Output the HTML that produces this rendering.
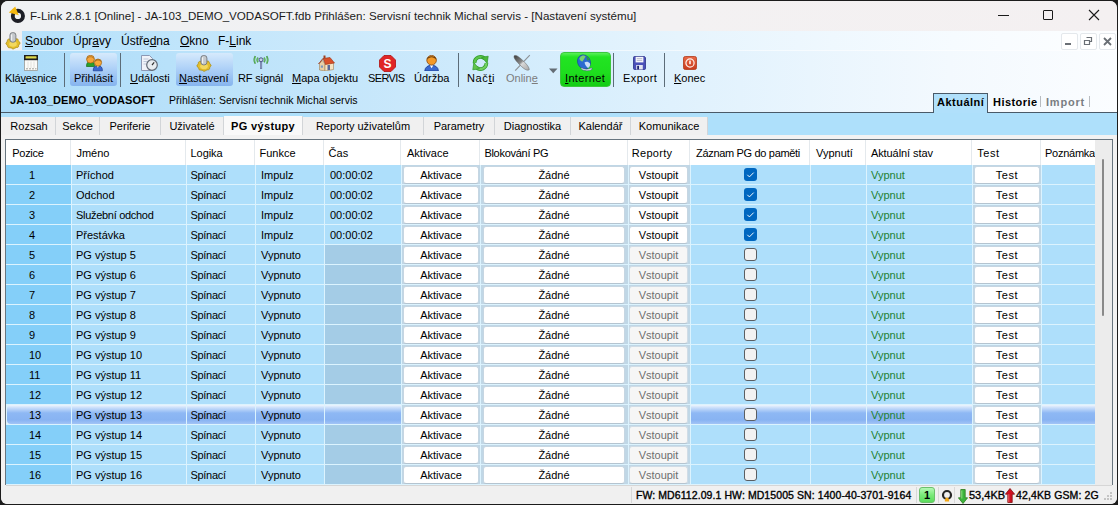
<!DOCTYPE html>
<html><head><meta charset="utf-8">
<style>
*{margin:0;padding:0;box-sizing:border-box}
html,body{width:1118px;height:505px;overflow:hidden;background:#1c1c1c}
body{font-family:"Liberation Sans", sans-serif;font-size:11px;color:#000;position:relative}
.a{position:absolute;white-space:nowrap}
.t{position:absolute;white-space:nowrap;line-height:13px;font-size:11px}
u{text-decoration:none;border-bottom:1px solid currentColor;line-height:9px;display:inline-block}
</style></head><body>

<div class="a" style="left:1px;top:1px;width:1116px;height:503px;background:#f0f0f0;border-radius:7px 7px 7px 7px"></div>
<div class="a" style="left:1px;top:1px;width:1116px;height:30px;background:linear-gradient(90deg,#eff1f3 0%,#f3f1f2 60%,#f4f0f1 100%);border-radius:7px 7px 0 0"></div>
<svg class="a" style="left:0px;top:0px" width="32" height="32" viewBox="0 0 32 32">
<circle cx="17.9" cy="15.9" r="5.1" fill="none" stroke="#1c1e26" stroke-width="3.9"/>
<path d="M8.8 12.6 L15.2 6.4 L18.8 15.2 Z" fill="#f4b810"/>
</svg>
<div class="a" style="left:30px;top:7.5px;font-size:11.6px;line-height:15px;color:#1a1a1a">F-Link 2.8.1 [Online] - JA-103_DEMO_VODASOFT.fdb Přihlášen: Servisní technik Michal servis - [Nastavení systému]</div>
<div class="a" style="left:998px;top:15px;width:11px;height:1px;background:#1a1a1a"></div>
<div class="a" style="left:1043px;top:10px;width:10px;height:10px;border:1px solid #1a1a1a;border-radius:1px"></div>
<svg class="a" style="left:1088px;top:9px" width="12" height="12" viewBox="0 0 12 12"><path d="M1 1 L11 11 M11 1 L1 11" stroke="#1a1a1a" stroke-width="1.1"/></svg>
<div class="a" style="left:1px;top:31px;width:1116px;height:82px;background:linear-gradient(90deg,#acdcf9 0%,#c4e6fb 30%,#dff1fd 60%,#f3f9fe 85%,#fbfdff 100%)"></div>
<div class="a" style="left:22px;top:31px;width:1095px;height:19px;background:linear-gradient(90deg,#b4e0fa 0%,#cdeafc 30%,#e6f4fd 60%,#f6fbff 85%,#fdfeff 100%)"></div>
<div class="a" style="left:1px;top:31px;width:21px;height:19px;background:#f0f0f0"></div>
<div class="a" style="left:1px;top:50px;width:1116px;height:1px;background:rgba(255,255,255,0.6)"></div>
<svg class="a" style="left:5px;top:32px" width="17" height="18" viewBox="0 0 17 18">
<path d="M15.04 11.30 L14.82 11.83 L14.18 12.28 L14.03 12.75 L13.82 13.21 L13.56 13.66 L13.62 14.28 L13.43 14.83 L12.98 15.25 L12.35 15.51 L11.50 15.46 L10.97 15.71 L10.41 15.92 L9.83 16.08 L9.32 16.57 L8.69 16.84 L8.00 16.89 L7.33 16.72 L6.77 16.20 L6.17 16.08 L5.59 15.92 L5.03 15.71 L4.24 15.76 L3.55 15.61 L3.02 15.25 L2.70 14.75 L2.76 14.08 L2.44 13.66 L2.18 13.21 L1.97 12.75 L1.37 12.35 L1.01 11.85 L0.96 11.30 L1.18 10.77 L1.82 10.32 L1.97 9.85 L2.18 9.39 L2.44 8.94 L2.38 8.32 L2.57 7.77 L3.02 7.35 L3.65 7.09 L4.50 7.14 L5.03 6.89 L5.59 6.68 L6.17 6.52 L6.68 6.03 L7.31 5.76 L8.00 5.71 L8.67 5.88 L9.23 6.40 L9.83 6.52 L10.41 6.68 L10.97 6.89 L11.76 6.84 L12.45 6.99 L12.98 7.35 L13.30 7.85 L13.24 8.52 L13.56 8.94 L13.82 9.39 L14.03 9.85 L14.63 10.25 L14.99 10.75 L15.04 11.30Z" fill="#e4be2c" stroke="#a88a10" stroke-width="0.8"/>
<ellipse cx="8" cy="12" rx="3.8" ry="2.8" fill="#f2d860"/>
<rect x="4.9" y="0.6" width="6" height="9.6" rx="2.6" fill="#c4c8cc" stroke="#686c70" stroke-width="0.8"/>
<path d="M6.6 2.5v6" stroke="#f4f4f4" stroke-width="1.1"/>
</svg>
<div class="t" style="left:25px;top:35px;font-size:12px;color:#000"><span style="text-decoration:underline;text-underline-offset:1px">S</span>oubor</div>
<div class="t" style="left:73px;top:35px;font-size:12px">Úpr<span style="text-decoration:underline;text-underline-offset:1px">a</span>vy</div>
<div class="t" style="left:121px;top:35px;font-size:12px">Ústře<span style="text-decoration:underline;text-underline-offset:1px">d</span>na</div>
<div class="t" style="left:180px;top:35px;font-size:12px"><span style="text-decoration:underline;text-underline-offset:1px">O</span>kno</div>
<div class="t" style="left:218px;top:35px;font-size:12px">F-<span style="text-decoration:underline;text-underline-offset:1px">L</span>ink</div>
<div class="a" style="left:1061px;top:33px;width:17px;height:17px;background:#fff;border:1px solid #e4e8ec;border-radius:2px"></div>
<div class="a" style="left:1080px;top:33px;width:17px;height:17px;background:#fff;border:1px solid #e4e8ec;border-radius:2px"></div>
<div class="a" style="left:1099px;top:33px;width:17px;height:17px;background:#fff;border:1px solid #e4e8ec;border-radius:2px"></div>
<div class="a" style="left:1065px;top:43px;width:6px;height:2px;background:#6a6f75"></div>
<svg class="a" style="left:1083px;top:36px" width="11" height="11" viewBox="0 0 11 11"><path d="M3.5 1.5h5v4h-2 M1.5 4.5h5v4h-5z" fill="none" stroke="#6a6f75" stroke-width="1.2"/></svg>
<svg class="a" style="left:1102px;top:36px" width="11" height="11" viewBox="0 0 11 11"><path d="M2 2L9 9M9 2L2 9" stroke="#6a6f75" stroke-width="1.8"/></svg>
<div class="a" style="left:64px;top:53px;width:1px;height:34px;background:#5c6c78"></div>
<div class="a" style="left:120px;top:53px;width:1px;height:34px;background:#5c6c78"></div>
<div class="a" style="left:458px;top:53px;width:1px;height:34px;background:#5c6c78"></div>
<div class="a" style="left:613px;top:53px;width:1px;height:34px;background:#5c6c78"></div>
<div class="a" style="left:664px;top:53px;width:1px;height:34px;background:#5c6c78"></div>
<div class="a" style="left:70px;top:53px;width:47px;height:33px;border-radius:3px;background:linear-gradient(180deg,#d6eafc 0%,#b0d2f8 45%,#86b4ee 100%)"></div>
<div class="a" style="left:176px;top:53px;width:57px;height:33px;border-radius:3px;background:linear-gradient(180deg,#d6eafc 0%,#b0d2f8 45%,#86b4ee 100%)"></div>
<div class="a" style="left:560px;top:52px;width:51px;height:35px;border-radius:4px;background:linear-gradient(180deg,#5af05a 0%,#22e422 12%,#1ede1e 60%,#14cc14 100%);border:1px solid #3cc83c"></div>
<div class="t" style="left:5px;top:72px;color:#000;letter-spacing:-0.15px">Klá<span style="text-decoration:underline;text-underline-offset:1px">v</span>esnice</div>
<div class="t" style="left:74px;top:72px;color:#000;letter-spacing:0px">Přihlásit</div>
<div class="t" style="left:130px;top:72px;color:#000;letter-spacing:0px"><span style="text-decoration:underline;text-underline-offset:1px">U</span>dálosti</div>
<div class="t" style="left:179px;top:72px;color:#000;letter-spacing:0px"><span style="text-decoration:underline;text-underline-offset:1px">N</span>astavení</div>
<div class="t" style="left:238px;top:72px;color:#000;letter-spacing:-0.15px">RF signál</div>
<div class="t" style="left:292px;top:72px;color:#000;letter-spacing:0px"><span style="text-decoration:underline;text-underline-offset:1px">M</span>apa objektu</div>
<div class="t" style="left:368px;top:72px;color:#000;letter-spacing:-0.6px">SERVIS</div>
<div class="t" style="left:414px;top:72px;color:#000;letter-spacing:0px">Údržba</div>
<div class="t" style="left:467px;top:72px;color:#000;letter-spacing:0.6px">Nač<span style="text-decoration:underline;text-underline-offset:1px">t</span>i</div>
<div class="t" style="left:506px;top:72px;color:#7c7c7c;letter-spacing:0px">Onlin<span style="text-decoration:underline;text-underline-offset:1px">e</span></div>
<div class="t" style="left:565px;top:72px;color:#000;letter-spacing:0.35px"><span style="text-decoration:underline;text-underline-offset:1px">I</span>nternet</div>
<div class="t" style="left:623px;top:72px;color:#000;letter-spacing:0.4px">Export</div>
<div class="t" style="left:674px;top:72px;color:#000;letter-spacing:0px"><span style="text-decoration:underline;text-underline-offset:1px">K</span>onec</div>

<svg class="a" style="left:24px;top:55px" width="14" height="16" viewBox="0 0 14 16">
<rect x="0.5" y="0.5" width="13" height="15" fill="#fbfbf8" stroke="#9a9a94" stroke-width="0.8"/>
<rect x="0" y="0" width="14" height="5.2" fill="#1e1e1e"/><rect x="1.5" y="1.3" width="11" height="2.2" rx="0.6" fill="#dcd84a"/>
<path d="M4 6.5v6.5 M7 6.5v6.5 M10 6.5v6.5" stroke="#dcdcd4" stroke-width="0.8"/>
<path d="M2 13.8h2 M5 13.8h2 M8 13.8h2 M11 13.8h1.5" stroke="#8a8a84" stroke-width="0.8"/>
</svg>
<svg class="a" style="left:85px;top:55px" width="18" height="17" viewBox="0 0 18 17">
<path d="M1.5 11.5c0-3.5 1-5 4-5s4 1.5 4 5z" fill="#2aa02c" stroke="#146a16" stroke-width="0.7"/>
<circle cx="5.5" cy="4.2" r="3.9" fill="#f6a43a" stroke="#9a6010" stroke-width="0.7"/>
<path d="M1.6 4.4c-0.3-4 7.8-4.6 7.8 0c-1-1.6-2.6-2.2-3.9-2.2s-2.9 0.6-3.9 2.2z" fill="#b47a28"/>
<path d="M8.2 15.8c0-3.6 1.4-5 4.6-5s4.6 1.4 4.6 5z" fill="#3a68d0" stroke="#1a3a90" stroke-width="0.7"/>
<path d="M11.8 10.9l1 1.8l1-1.8z" fill="#fff"/>
<circle cx="13" cy="7.6" r="3.6" fill="#f8a83c" stroke="#9a6010" stroke-width="0.7"/>
<path d="M9.4 7.6c-0.2-4.4 7.4-4.4 7.2 0c-1-1.4-2.2-2-3.6-2s-2.6 0.6-3.6 2z" fill="#a87020"/>
</svg>
<svg class="a" style="left:141px;top:55px" width="17" height="16" viewBox="0 0 17 16">
<path d="M0.5 0.5h8l3 3v12h-11z" fill="#f0f2f8" stroke="#8c98b4" stroke-width="1"/>
<path d="M2.5 4h5 M2.5 6.5h4 M2.5 9h3" stroke="#b0bcd0" stroke-width="0.8"/>
<circle cx="11" cy="10" r="5.3" fill="#e8ecf0" stroke="#606874" stroke-width="1.2"/>
<path d="M11 10l2.2-2.6" stroke="#303030" stroke-width="1.2"/>
</svg>
<svg class="a" style="left:196px;top:55px" width="16" height="17" viewBox="0 0 16 17">
<path d="M15.04 10.60 L14.82 11.13 L14.18 11.58 L14.03 12.05 L13.82 12.51 L13.56 12.96 L13.62 13.58 L13.43 14.13 L12.98 14.55 L12.35 14.81 L11.50 14.76 L10.97 15.01 L10.41 15.22 L9.83 15.38 L9.32 15.87 L8.69 16.14 L8.00 16.19 L7.33 16.02 L6.77 15.50 L6.17 15.38 L5.59 15.22 L5.03 15.01 L4.24 15.06 L3.55 14.91 L3.02 14.55 L2.70 14.05 L2.76 13.38 L2.44 12.96 L2.18 12.51 L1.97 12.05 L1.37 11.65 L1.01 11.15 L0.96 10.60 L1.18 10.07 L1.82 9.62 L1.97 9.15 L2.18 8.69 L2.44 8.24 L2.38 7.62 L2.57 7.07 L3.02 6.65 L3.65 6.39 L4.50 6.44 L5.03 6.19 L5.59 5.98 L6.17 5.82 L6.68 5.33 L7.31 5.06 L8.00 5.01 L8.67 5.18 L9.23 5.70 L9.83 5.82 L10.41 5.98 L10.97 6.19 L11.76 6.14 L12.45 6.29 L12.98 6.65 L13.30 7.15 L13.24 7.82 L13.56 8.24 L13.82 8.69 L14.03 9.15 L14.63 9.55 L14.99 10.05 L15.04 10.60Z" fill="#e4be2c" stroke="#a88a10" stroke-width="0.8"/>
<ellipse cx="8" cy="11.3" rx="3.8" ry="2.8" fill="#f2d860"/>
<rect x="4.9" y="0.5" width="6" height="9.4" rx="2.6" fill="#c4c8cc" stroke="#686c70" stroke-width="0.8"/>
<path d="M6.6 2.3v6" stroke="#f4f4f4" stroke-width="1.1"/>
</svg>
<svg class="a" style="left:253px;top:55px" width="16" height="15" viewBox="0 0 16 15">
<path d="M2.4 1.2C1.2 3.2 1.2 6.6 2.4 8.6 M13.6 1.2C14.8 3.2 14.8 6.6 13.6 8.6 M5 2.6C4.2 3.8 4.2 6 5 7.2 M11 2.6C11.8 3.8 11.8 6 11 7.2" stroke="#3c8a3c" stroke-width="1.6" fill="none"/>
<path d="M2.4 1.6C1.5 3.4 1.5 6.4 2.4 8.2 M13.6 1.6C14.5 3.4 14.5 6.4 13.6 8.2 M5 3C4.5 4 4.5 5.8 5 6.8 M11 3C11.5 4 11.5 5.8 11 6.8" stroke="#8ae88a" stroke-width="0.7" fill="none"/>
<rect x="7.2" y="5.5" width="1.7" height="8.3" fill="#8a96c0" stroke="#5a6690" stroke-width="0.4"/>
<circle cx="8" cy="4.8" r="2" fill="#c8d0e8" stroke="#4a5488" stroke-width="1"/>
</svg>
<svg class="a" style="left:318px;top:55px" width="17" height="16" viewBox="0 0 17 16">
<path d="M1.5 8.5v6.5l5.5 1v-7l-2.5-3.5z" fill="#e8d0a8" stroke="#a08058" stroke-width="0.6"/>
<path d="M7 9v7l8.5-1.5v-6l-3-3z" fill="#f6e4c4" stroke="#a08058" stroke-width="0.6"/>
<path d="M0.5 9L5 3.5L7.5 9.5L16.5 8L12 2.5L5 3.5z" fill="#d8502a" stroke="#9a3010" stroke-width="0.6"/>
<rect x="5.5" y="0.5" width="2" height="3" fill="#a04020"/>
<rect x="9.5" y="10" width="2.5" height="5" fill="#5a6a98"/>
<rect x="2.8" y="10.5" width="2.2" height="2.2" fill="#7a9ac0"/>
</svg>
<svg class="a" style="left:379px;top:55px" width="17" height="17" viewBox="0 0 17 17">
<path d="M5 0.5h7l4.5 4.5v7l-4.5 4.5h-7l-4.5-4.5v-7z" fill="#e02626" stroke="#b01010" stroke-width="0.8"/>
<text x="8.5" y="12.6" font-family="Liberation Sans" font-weight="bold" font-size="12" text-anchor="middle" fill="#fff">S</text>
</svg>
<svg class="a" style="left:424px;top:55px" width="15" height="16" viewBox="0 0 15 16">
<path d="M0.8 16C0.8 8.3 14.4 8.3 14.4 16Z" fill="#3a6ad0" stroke="#1a3a90" stroke-width="0.8"/>
<path d="M5.8 10.2l1.8 3l1.8-3z" fill="#fff"/>
<circle cx="7.6" cy="5.2" r="4.8" fill="#f49a28" stroke="#8a4a10" stroke-width="0.8"/>
<path d="M2.9 4.8c0-4.6 9.4-4.6 9.4 0c-1.2-1.8-3-2.6-4.7-2.6s-3.5 0.8-4.7 2.6z" fill="#6a4010"/>
</svg>
<svg class="a" style="left:472px;top:55px" width="17" height="16" viewBox="0 0 17 16">
<path d="M2.6 8.2A5.9 5.9 0 0 1 12.6 3.6" fill="none" stroke="#2e9a2a" stroke-width="3.6"/>
<path d="M2.6 8.2A5.9 5.9 0 0 1 12.6 3.6" fill="none" stroke="#5cc44a" stroke-width="2.2"/>
<path d="M9.6 2.2L16.2 1.2L15.2 8.2z" fill="#4cb83c" stroke="#2e9a2a" stroke-width="0.7"/>
<path d="M14.4 7.8A5.9 5.9 0 0 1 4.4 12.4" fill="none" stroke="#2e9a2a" stroke-width="3.6"/>
<path d="M14.4 7.8A5.9 5.9 0 0 1 4.4 12.4" fill="none" stroke="#72d060" stroke-width="2.2"/>
<path d="M7.4 13.8L0.8 14.8L1.8 7.8z" fill="#60c44c" stroke="#2e9a2a" stroke-width="0.7"/>
</svg>
<svg class="a" style="left:513px;top:54px" width="18" height="18" viewBox="0 0 18 18">
<defs><linearGradient id="sg" x1="0" y1="0" x2="1" y2="1"><stop offset="0" stop-color="#3a3a3a"/><stop offset="0.45" stop-color="#8a8a8a"/><stop offset="0.55" stop-color="#d8d8d8"/><stop offset="1" stop-color="#a8a8a8"/></linearGradient></defs>
<path d="M16.8 1.2L2.2 16.6" stroke="#8c9094" stroke-width="1.1"/>
<path d="M1.2 1.8C3 0.6 5.5 2.5 9.5 6.2C13.5 10 16.5 13.5 16.2 15.8C14 17 11 15 7.5 11.5C3.5 7.5 0.2 4 1.2 1.8z" fill="url(#sg)" stroke="#5a5a5a" stroke-width="0.5"/>
</svg>
<svg class="a" style="left:576px;top:54px" width="18" height="18" viewBox="0 0 18 18">
<ellipse cx="8" cy="8" rx="6.3" ry="7.4" transform="rotate(-30 8 8)" fill="#2a6ad0" stroke="#1a4a90" stroke-width="0.6"/>
<path d="M4 3.5C5.5 1.5 8 1 9.5 2.2C9 4 7.5 5.5 6.5 7.5C5 7.5 3.5 6 3.4 4.6z" fill="#7ad070"/>
<path d="M10 2.5C12 3 13 4.5 13.2 6L11.5 6.5C11 5 10.5 4 10 2.5z" fill="#2e9a3a"/>
<path d="M8.5 8.5C10 7 12.5 7.5 14 9.5C14.5 11.5 13.5 13.5 12 14C10.5 13 9 11 8.5 8.5z" fill="#c8dcf8"/>
<path d="M5.5 13.5C8 15.5 12 15.8 15.5 13.8L16.2 15.2C12.5 17.5 8 17 5 15z" fill="#e8eef8" stroke="#3a4a70" stroke-width="0.5"/>
</svg>
<svg class="a" style="left:633px;top:56px" width="13" height="14" viewBox="0 0 13 14">
<path d="M1.6 0.5h9.8l1.1 1.1v10.8a1.1 1.1 0 0 1-1.1 1.1h-9.8a1.1 1.1 0 0 1-1.1-1.1v-10.8a1.1 1.1 0 0 1 1.1-1.1z" fill="#4a50b8" stroke="#2a3088" stroke-width="0.8"/>
<rect x="2.6" y="0.8" width="7.8" height="5.6" fill="#f6f6fa"/>
<path d="M3.8 2.6h5.4 M3.8 4.4h5.4" stroke="#a8acc4" stroke-width="0.8"/>
<rect x="3.2" y="9" width="6.6" height="4.5" fill="#e4e6f0"/><rect x="4.2" y="9.8" width="1.8" height="3.7" fill="#1c2270"/>
</svg>
<svg class="a" style="left:683px;top:56px" width="14" height="14" viewBox="0 0 14 14">
<defs><linearGradient id="kg" x1="0" y1="0" x2="0" y2="1"><stop offset="0" stop-color="#e86a48"/><stop offset="1" stop-color="#c83a1c"/></linearGradient></defs>
<rect x="0.5" y="0.5" width="13" height="13" rx="1.8" fill="url(#kg)" stroke="#b03818" stroke-width="0.8"/>
<circle cx="7" cy="7" r="4.1" fill="none" stroke="#fff2ec" stroke-width="1.2"/>
<rect x="6.2" y="4.6" width="1.6" height="3.6" fill="#fff2ec"/>
</svg>
<svg class="a" style="left:549px;top:68px" width="9" height="6" viewBox="0 0 9 6"><path d="M0 0.5h8.5l-4.25 4.8z" fill="#656d75"/></svg>

<div class="t" style="left:10px;top:94px;font-weight:bold;letter-spacing:0.12px">JA-103_DEMO_VODASOFT</div>
<div class="t" style="left:169px;top:94px;font-size:10.5px;letter-spacing:0.03px">Přihlášen: Servisní technik Michal servis</div>
<div class="a" style="left:933px;top:93px;width:55px;height:20px;background:#b0e0fb;border:1px solid #4a5a68;border-bottom:none"></div>
<div class="t" style="left:937px;top:96px;font-weight:bold;letter-spacing:0.5px">Aktuální</div>
<div class="t" style="left:993px;top:96px;font-weight:bold;letter-spacing:0.45px">Historie</div>
<div class="a" style="left:1040px;top:96px;width:1px;height:11px;background:#b8bcc0"></div>
<div class="t" style="left:1046px;top:96px;font-weight:bold;color:#7a7e82;letter-spacing:0.8px">Import</div>
<div class="a" style="left:1089px;top:96px;width:1px;height:11px;background:#b8bcc0"></div>
<div class="a" style="left:1px;top:112px;width:932px;height:1px;background:#4a5a68"></div>
<div class="a" style="left:988px;top:112px;width:129px;height:1px;background:#4a5a68"></div>
<div class="a" style="left:1px;top:113px;width:1116px;height:24px;background:#aee0fb"></div>
<div class="a" style="left:1px;top:117px;width:2px;height:18px;background:#f0f0f0"></div>
<div class="a" style="left:3px;top:117px;width:53px;height:18px;background:#f0f0f0;border-right:1px solid #d2d5d8;text-align:center;padding-top:1px;line-height:17px;">Rozsah</div>
<div class="a" style="left:56px;top:117px;width:44px;height:18px;background:#f0f0f0;border-right:1px solid #d2d5d8;text-align:center;padding-top:1px;line-height:17px;">Sekce</div>
<div class="a" style="left:100px;top:117px;width:61px;height:18px;background:#f0f0f0;border-right:1px solid #d2d5d8;text-align:center;padding-top:1px;line-height:17px;">Periferie</div>
<div class="a" style="left:161px;top:117px;width:63px;height:18px;background:#f0f0f0;border-right:1px solid #d2d5d8;text-align:center;padding-top:1px;line-height:17px;">Uživatelé</div>
<div class="a" style="left:224px;top:116px;width:79px;height:19px;background:#f9f9f9;border-right:1px solid #d2d5d8;text-align:center;padding-top:1px;line-height:18px;font-weight:bold;letter-spacing:0.35px;">PG výstupy</div>
<div class="a" style="left:303px;top:117px;width:121px;height:18px;background:#f0f0f0;border-right:1px solid #d2d5d8;text-align:center;padding-top:1px;line-height:17px;">Reporty uživatelům</div>
<div class="a" style="left:424px;top:117px;width:71px;height:18px;background:#f0f0f0;border-right:1px solid #d2d5d8;text-align:center;padding-top:1px;line-height:17px;">Parametry</div>
<div class="a" style="left:495px;top:117px;width:76px;height:18px;background:#f0f0f0;border-right:1px solid #d2d5d8;text-align:center;padding-top:1px;line-height:17px;">Diagnostika</div>
<div class="a" style="left:571px;top:117px;width:60px;height:18px;background:#f0f0f0;border-right:1px solid #d2d5d8;text-align:center;padding-top:1px;line-height:17px;">Kalendář</div>
<div class="a" style="left:631px;top:117px;width:77px;height:18px;background:#f0f0f0;border-right:1px solid #d2d5d8;text-align:center;padding-top:1px;line-height:17px;">Komunikace</div>
<div class="a" style="left:1px;top:135px;width:1116px;height:350px;background:#f2f2f2"></div>
<div class="a" style="left:5px;top:139px;width:1108px;height:346px;background:#ffffff;border:1px solid #68757f;border-bottom:none"></div>
<div class="t" style="left:12.3px;top:147px;letter-spacing:-0.3px">Pozice</div>
<div class="t" style="left:76.4px;top:147px;letter-spacing:0px">Jméno</div>
<div class="t" style="left:190.6px;top:147px;letter-spacing:-0.1px">Logika</div>
<div class="t" style="left:259.5px;top:147px;letter-spacing:0px">Funkce</div>
<div class="t" style="left:328.6px;top:147px;letter-spacing:0px">Čas</div>
<div class="t" style="left:407px;top:147px;letter-spacing:0px">Aktivace</div>
<div class="t" style="left:484.4px;top:147px;letter-spacing:-0.28px">Blokování PG</div>
<div class="t" style="left:631.8px;top:147px;letter-spacing:0.28px">Reporty</div>
<div class="t" style="left:696px;top:147px;letter-spacing:-0.32px">Záznam PG do paměti</div>
<div class="t" style="left:816px;top:147px;letter-spacing:0px">Vypnutí</div>
<div class="t" style="left:870.9px;top:147px;letter-spacing:-0.07px">Aktuální stav</div>
<div class="t" style="left:977.3px;top:147px;letter-spacing:0.55px">Test</div>
<div class="t" style="left:1045.0px;top:147px;letter-spacing:-0.25px">Poznámka</div>
<div class="a" style="left:70px;top:140px;width:1px;height:25px;background:#e4e9ed"></div>
<div class="a" style="left:185px;top:140px;width:1px;height:25px;background:#e4e9ed"></div>
<div class="a" style="left:254px;top:140px;width:1px;height:25px;background:#e4e9ed"></div>
<div class="a" style="left:323px;top:140px;width:1px;height:25px;background:#e4e9ed"></div>
<div class="a" style="left:400px;top:140px;width:1px;height:25px;background:#e4e9ed"></div>
<div class="a" style="left:479px;top:140px;width:1px;height:25px;background:#e4e9ed"></div>
<div class="a" style="left:627px;top:140px;width:1px;height:25px;background:#e4e9ed"></div>
<div class="a" style="left:689px;top:140px;width:1px;height:25px;background:#e4e9ed"></div>
<div class="a" style="left:809px;top:140px;width:1px;height:25px;background:#e4e9ed"></div>
<div class="a" style="left:865px;top:140px;width:1px;height:25px;background:#e4e9ed"></div>
<div class="a" style="left:971px;top:140px;width:1px;height:25px;background:#e4e9ed"></div>
<div class="a" style="left:1040px;top:140px;width:1px;height:25px;background:#e4e9ed"></div>
<div class="a" style="left:1095px;top:140px;width:17px;height:345px;background:#ececec"></div>
<div class="a" style="left:1102px;top:159px;width:2px;height:157px;background:#8a8a8a;border-radius:1px"></div>
<div class="a" style="left:6px;top:165px;width:1089px;height:320px;background:#dcf3fe"></div>
<div class="a" style="left:6px;top:165px;width:65px;height:19px;background:#84cff9"></div>
<div class="a" style="left:72px;top:165px;width:114px;height:19px;background:#aedffb"></div>
<div class="a" style="left:187px;top:165px;width:68px;height:19px;background:#aedffb"></div>
<div class="a" style="left:256px;top:165px;width:68px;height:19px;background:#aedffb"></div>
<div class="a" style="left:325px;top:165px;width:76px;height:19px;background:#aedffb"></div>
<div class="a" style="left:402px;top:165px;width:78px;height:19px;background:#c0d7e6"></div>
<div class="a" style="left:481px;top:165px;width:147px;height:19px;background:#c0d7e6"></div>
<div class="a" style="left:629px;top:165px;width:61px;height:19px;background:#c0d7e6"></div>
<div class="a" style="left:691px;top:165px;width:119px;height:19px;background:#aedffb"></div>
<div class="a" style="left:811px;top:165px;width:55px;height:19px;background:#aedffb"></div>
<div class="a" style="left:867px;top:165px;width:105px;height:19px;background:#aedffb"></div>
<div class="a" style="left:973px;top:165px;width:68px;height:19px;background:#c0d7e6"></div>
<div class="a" style="left:1042px;top:165px;width:53px;height:19px;background:#aedffb"></div>
<div class="t" style="left:29px;top:169px">1</div>
<div class="t" style="left:76px;top:169px;letter-spacing:0px">Příchod</div>
<div class="t" style="left:190.5px;top:169px;letter-spacing:-0.3px">Spínací</div>
<div class="t" style="left:261px;top:169px">Impulz</div>
<div class="t" style="left:330px;top:169px">00:00:02</div>
<div class="a" style="left:403px;top:166px;width:76px;height:18px;background:#fff;border:1px solid #c6d6e2;border-bottom-color:#b4c4d0;border-radius:3px;text-align:center;line-height:16px;color:#000">Aktivace</div>
<div class="a" style="left:483px;top:166px;width:142px;height:18px;background:#fff;border:1px solid #c6d6e2;border-bottom-color:#b4c4d0;border-radius:3px;text-align:center;line-height:16px;color:#000">Žádné</div>
<div class="a" style="left:629px;top:166px;width:59px;height:18px;background:#fff;border:1px solid #c6d6e2;border-bottom-color:#b4c4d0;border-radius:3px;text-align:center;line-height:16px;color:#000">Vstoupit</div>
<div class="a" style="left:744px;top:168px;width:13px;height:13px;background:#0067c0;border-radius:3px"></div>
<svg class="a" style="left:744px;top:168px" width="13" height="13" viewBox="0 0 13 13"><path d="M3.3 6.8L5.4 8.9L9.7 4.6" fill="none" stroke="#fff" stroke-width="0.95"/></svg>
<div class="t" style="left:871px;top:169px;color:#1f7f33">Vypnut</div>
<div class="a" style="left:974px;top:166px;width:66px;height:18px;background:#fff;border:1px solid #c6d6e2;border-bottom-color:#b4c4d0;border-radius:3px;text-align:center;line-height:16px;color:#000"><span style="letter-spacing:0.6px">Test</span></div>
<div class="a" style="left:6px;top:185px;width:65px;height:19px;background:#84cff9"></div>
<div class="a" style="left:72px;top:185px;width:114px;height:19px;background:#aedffb"></div>
<div class="a" style="left:187px;top:185px;width:68px;height:19px;background:#aedffb"></div>
<div class="a" style="left:256px;top:185px;width:68px;height:19px;background:#aedffb"></div>
<div class="a" style="left:325px;top:185px;width:76px;height:19px;background:#aedffb"></div>
<div class="a" style="left:402px;top:185px;width:78px;height:19px;background:#c0d7e6"></div>
<div class="a" style="left:481px;top:185px;width:147px;height:19px;background:#c0d7e6"></div>
<div class="a" style="left:629px;top:185px;width:61px;height:19px;background:#c0d7e6"></div>
<div class="a" style="left:691px;top:185px;width:119px;height:19px;background:#aedffb"></div>
<div class="a" style="left:811px;top:185px;width:55px;height:19px;background:#aedffb"></div>
<div class="a" style="left:867px;top:185px;width:105px;height:19px;background:#aedffb"></div>
<div class="a" style="left:973px;top:185px;width:68px;height:19px;background:#c0d7e6"></div>
<div class="a" style="left:1042px;top:185px;width:53px;height:19px;background:#aedffb"></div>
<div class="t" style="left:29px;top:189px">2</div>
<div class="t" style="left:76px;top:189px;letter-spacing:0px">Odchod</div>
<div class="t" style="left:190.5px;top:189px;letter-spacing:-0.3px">Spínací</div>
<div class="t" style="left:261px;top:189px">Impulz</div>
<div class="t" style="left:330px;top:189px">00:00:02</div>
<div class="a" style="left:403px;top:186px;width:76px;height:18px;background:#fff;border:1px solid #c6d6e2;border-bottom-color:#b4c4d0;border-radius:3px;text-align:center;line-height:16px;color:#000">Aktivace</div>
<div class="a" style="left:483px;top:186px;width:142px;height:18px;background:#fff;border:1px solid #c6d6e2;border-bottom-color:#b4c4d0;border-radius:3px;text-align:center;line-height:16px;color:#000">Žádné</div>
<div class="a" style="left:629px;top:186px;width:59px;height:18px;background:#fff;border:1px solid #c6d6e2;border-bottom-color:#b4c4d0;border-radius:3px;text-align:center;line-height:16px;color:#000">Vstoupit</div>
<div class="a" style="left:744px;top:188px;width:13px;height:13px;background:#0067c0;border-radius:3px"></div>
<svg class="a" style="left:744px;top:188px" width="13" height="13" viewBox="0 0 13 13"><path d="M3.3 6.8L5.4 8.9L9.7 4.6" fill="none" stroke="#fff" stroke-width="0.95"/></svg>
<div class="t" style="left:871px;top:189px;color:#1f7f33">Vypnut</div>
<div class="a" style="left:974px;top:186px;width:66px;height:18px;background:#fff;border:1px solid #c6d6e2;border-bottom-color:#b4c4d0;border-radius:3px;text-align:center;line-height:16px;color:#000"><span style="letter-spacing:0.6px">Test</span></div>
<div class="a" style="left:6px;top:205px;width:65px;height:19px;background:#84cff9"></div>
<div class="a" style="left:72px;top:205px;width:114px;height:19px;background:#aedffb"></div>
<div class="a" style="left:187px;top:205px;width:68px;height:19px;background:#aedffb"></div>
<div class="a" style="left:256px;top:205px;width:68px;height:19px;background:#aedffb"></div>
<div class="a" style="left:325px;top:205px;width:76px;height:19px;background:#aedffb"></div>
<div class="a" style="left:402px;top:205px;width:78px;height:19px;background:#c0d7e6"></div>
<div class="a" style="left:481px;top:205px;width:147px;height:19px;background:#c0d7e6"></div>
<div class="a" style="left:629px;top:205px;width:61px;height:19px;background:#c0d7e6"></div>
<div class="a" style="left:691px;top:205px;width:119px;height:19px;background:#aedffb"></div>
<div class="a" style="left:811px;top:205px;width:55px;height:19px;background:#aedffb"></div>
<div class="a" style="left:867px;top:205px;width:105px;height:19px;background:#aedffb"></div>
<div class="a" style="left:973px;top:205px;width:68px;height:19px;background:#c0d7e6"></div>
<div class="a" style="left:1042px;top:205px;width:53px;height:19px;background:#aedffb"></div>
<div class="t" style="left:29px;top:209px">3</div>
<div class="t" style="left:76px;top:209px;letter-spacing:-0.3px">Služební odchod</div>
<div class="t" style="left:190.5px;top:209px;letter-spacing:-0.3px">Spínací</div>
<div class="t" style="left:261px;top:209px">Impulz</div>
<div class="t" style="left:330px;top:209px">00:00:02</div>
<div class="a" style="left:403px;top:206px;width:76px;height:18px;background:#fff;border:1px solid #c6d6e2;border-bottom-color:#b4c4d0;border-radius:3px;text-align:center;line-height:16px;color:#000">Aktivace</div>
<div class="a" style="left:483px;top:206px;width:142px;height:18px;background:#fff;border:1px solid #c6d6e2;border-bottom-color:#b4c4d0;border-radius:3px;text-align:center;line-height:16px;color:#000">Žádné</div>
<div class="a" style="left:629px;top:206px;width:59px;height:18px;background:#fff;border:1px solid #c6d6e2;border-bottom-color:#b4c4d0;border-radius:3px;text-align:center;line-height:16px;color:#000">Vstoupit</div>
<div class="a" style="left:744px;top:208px;width:13px;height:13px;background:#0067c0;border-radius:3px"></div>
<svg class="a" style="left:744px;top:208px" width="13" height="13" viewBox="0 0 13 13"><path d="M3.3 6.8L5.4 8.9L9.7 4.6" fill="none" stroke="#fff" stroke-width="0.95"/></svg>
<div class="t" style="left:871px;top:209px;color:#1f7f33">Vypnut</div>
<div class="a" style="left:974px;top:206px;width:66px;height:18px;background:#fff;border:1px solid #c6d6e2;border-bottom-color:#b4c4d0;border-radius:3px;text-align:center;line-height:16px;color:#000"><span style="letter-spacing:0.6px">Test</span></div>
<div class="a" style="left:6px;top:225px;width:65px;height:19px;background:#84cff9"></div>
<div class="a" style="left:72px;top:225px;width:114px;height:19px;background:#aedffb"></div>
<div class="a" style="left:187px;top:225px;width:68px;height:19px;background:#aedffb"></div>
<div class="a" style="left:256px;top:225px;width:68px;height:19px;background:#aedffb"></div>
<div class="a" style="left:325px;top:225px;width:76px;height:19px;background:#aedffb"></div>
<div class="a" style="left:402px;top:225px;width:78px;height:19px;background:#c0d7e6"></div>
<div class="a" style="left:481px;top:225px;width:147px;height:19px;background:#c0d7e6"></div>
<div class="a" style="left:629px;top:225px;width:61px;height:19px;background:#c0d7e6"></div>
<div class="a" style="left:691px;top:225px;width:119px;height:19px;background:#aedffb"></div>
<div class="a" style="left:811px;top:225px;width:55px;height:19px;background:#aedffb"></div>
<div class="a" style="left:867px;top:225px;width:105px;height:19px;background:#aedffb"></div>
<div class="a" style="left:973px;top:225px;width:68px;height:19px;background:#c0d7e6"></div>
<div class="a" style="left:1042px;top:225px;width:53px;height:19px;background:#aedffb"></div>
<div class="t" style="left:29px;top:229px">4</div>
<div class="t" style="left:76px;top:229px;letter-spacing:0px">Přestávka</div>
<div class="t" style="left:190.5px;top:229px;letter-spacing:-0.3px">Spínací</div>
<div class="t" style="left:261px;top:229px">Impulz</div>
<div class="t" style="left:330px;top:229px">00:00:02</div>
<div class="a" style="left:403px;top:226px;width:76px;height:18px;background:#fff;border:1px solid #c6d6e2;border-bottom-color:#b4c4d0;border-radius:3px;text-align:center;line-height:16px;color:#000">Aktivace</div>
<div class="a" style="left:483px;top:226px;width:142px;height:18px;background:#fff;border:1px solid #c6d6e2;border-bottom-color:#b4c4d0;border-radius:3px;text-align:center;line-height:16px;color:#000">Žádné</div>
<div class="a" style="left:629px;top:226px;width:59px;height:18px;background:#fff;border:1px solid #c6d6e2;border-bottom-color:#b4c4d0;border-radius:3px;text-align:center;line-height:16px;color:#000">Vstoupit</div>
<div class="a" style="left:744px;top:228px;width:13px;height:13px;background:#0067c0;border-radius:3px"></div>
<svg class="a" style="left:744px;top:228px" width="13" height="13" viewBox="0 0 13 13"><path d="M3.3 6.8L5.4 8.9L9.7 4.6" fill="none" stroke="#fff" stroke-width="0.95"/></svg>
<div class="t" style="left:871px;top:229px;color:#1f7f33">Vypnut</div>
<div class="a" style="left:974px;top:226px;width:66px;height:18px;background:#fff;border:1px solid #c6d6e2;border-bottom-color:#b4c4d0;border-radius:3px;text-align:center;line-height:16px;color:#000"><span style="letter-spacing:0.6px">Test</span></div>
<div class="a" style="left:6px;top:245px;width:65px;height:19px;background:#84cff9"></div>
<div class="a" style="left:72px;top:245px;width:114px;height:19px;background:#aedffb"></div>
<div class="a" style="left:187px;top:245px;width:68px;height:19px;background:#aedffb"></div>
<div class="a" style="left:256px;top:245px;width:68px;height:19px;background:#aedffb"></div>
<div class="a" style="left:325px;top:245px;width:76px;height:19px;background:#a4cce6"></div>
<div class="a" style="left:402px;top:245px;width:78px;height:19px;background:#c0d7e6"></div>
<div class="a" style="left:481px;top:245px;width:147px;height:19px;background:#c0d7e6"></div>
<div class="a" style="left:629px;top:245px;width:61px;height:19px;background:#c0d7e6"></div>
<div class="a" style="left:691px;top:245px;width:119px;height:19px;background:#aedffb"></div>
<div class="a" style="left:811px;top:245px;width:55px;height:19px;background:#aedffb"></div>
<div class="a" style="left:867px;top:245px;width:105px;height:19px;background:#aedffb"></div>
<div class="a" style="left:973px;top:245px;width:68px;height:19px;background:#c0d7e6"></div>
<div class="a" style="left:1042px;top:245px;width:53px;height:19px;background:#aedffb"></div>
<div class="t" style="left:29px;top:249px">5</div>
<div class="t" style="left:76px;top:249px;letter-spacing:0px">PG výstup 5</div>
<div class="t" style="left:190.5px;top:249px;letter-spacing:-0.3px">Spínací</div>
<div class="t" style="left:261px;top:249px">Vypnuto</div>
<div class="a" style="left:403px;top:246px;width:76px;height:18px;background:#fff;border:1px solid #c6d6e2;border-bottom-color:#b4c4d0;border-radius:3px;text-align:center;line-height:16px;color:#000">Aktivace</div>
<div class="a" style="left:483px;top:246px;width:142px;height:18px;background:#fff;border:1px solid #c6d6e2;border-bottom-color:#b4c4d0;border-radius:3px;text-align:center;line-height:16px;color:#000">Žádné</div>
<div class="a" style="left:629px;top:246px;width:59px;height:18px;background:#f6f6f6;border:1px solid #d0dce6;border-bottom-color:#b4c4d0;border-radius:3px;text-align:center;line-height:16px;color:#6e6e6e">Vstoupit</div>
<div class="a" style="left:744px;top:248px;width:13px;height:13px;background:#f2f2f2;border:1px solid #5a5e62;border-radius:3px"></div>
<div class="t" style="left:871px;top:249px;color:#1f7f33">Vypnut</div>
<div class="a" style="left:974px;top:246px;width:66px;height:18px;background:#fff;border:1px solid #c6d6e2;border-bottom-color:#b4c4d0;border-radius:3px;text-align:center;line-height:16px;color:#000"><span style="letter-spacing:0.6px">Test</span></div>
<div class="a" style="left:6px;top:265px;width:65px;height:19px;background:#84cff9"></div>
<div class="a" style="left:72px;top:265px;width:114px;height:19px;background:#aedffb"></div>
<div class="a" style="left:187px;top:265px;width:68px;height:19px;background:#aedffb"></div>
<div class="a" style="left:256px;top:265px;width:68px;height:19px;background:#aedffb"></div>
<div class="a" style="left:325px;top:265px;width:76px;height:19px;background:#a4cce6"></div>
<div class="a" style="left:402px;top:265px;width:78px;height:19px;background:#c0d7e6"></div>
<div class="a" style="left:481px;top:265px;width:147px;height:19px;background:#c0d7e6"></div>
<div class="a" style="left:629px;top:265px;width:61px;height:19px;background:#c0d7e6"></div>
<div class="a" style="left:691px;top:265px;width:119px;height:19px;background:#aedffb"></div>
<div class="a" style="left:811px;top:265px;width:55px;height:19px;background:#aedffb"></div>
<div class="a" style="left:867px;top:265px;width:105px;height:19px;background:#aedffb"></div>
<div class="a" style="left:973px;top:265px;width:68px;height:19px;background:#c0d7e6"></div>
<div class="a" style="left:1042px;top:265px;width:53px;height:19px;background:#aedffb"></div>
<div class="t" style="left:29px;top:269px">6</div>
<div class="t" style="left:76px;top:269px;letter-spacing:0px">PG výstup 6</div>
<div class="t" style="left:190.5px;top:269px;letter-spacing:-0.3px">Spínací</div>
<div class="t" style="left:261px;top:269px">Vypnuto</div>
<div class="a" style="left:403px;top:266px;width:76px;height:18px;background:#fff;border:1px solid #c6d6e2;border-bottom-color:#b4c4d0;border-radius:3px;text-align:center;line-height:16px;color:#000">Aktivace</div>
<div class="a" style="left:483px;top:266px;width:142px;height:18px;background:#fff;border:1px solid #c6d6e2;border-bottom-color:#b4c4d0;border-radius:3px;text-align:center;line-height:16px;color:#000">Žádné</div>
<div class="a" style="left:629px;top:266px;width:59px;height:18px;background:#f6f6f6;border:1px solid #d0dce6;border-bottom-color:#b4c4d0;border-radius:3px;text-align:center;line-height:16px;color:#6e6e6e">Vstoupit</div>
<div class="a" style="left:744px;top:268px;width:13px;height:13px;background:#f2f2f2;border:1px solid #5a5e62;border-radius:3px"></div>
<div class="t" style="left:871px;top:269px;color:#1f7f33">Vypnut</div>
<div class="a" style="left:974px;top:266px;width:66px;height:18px;background:#fff;border:1px solid #c6d6e2;border-bottom-color:#b4c4d0;border-radius:3px;text-align:center;line-height:16px;color:#000"><span style="letter-spacing:0.6px">Test</span></div>
<div class="a" style="left:6px;top:285px;width:65px;height:19px;background:#84cff9"></div>
<div class="a" style="left:72px;top:285px;width:114px;height:19px;background:#aedffb"></div>
<div class="a" style="left:187px;top:285px;width:68px;height:19px;background:#aedffb"></div>
<div class="a" style="left:256px;top:285px;width:68px;height:19px;background:#aedffb"></div>
<div class="a" style="left:325px;top:285px;width:76px;height:19px;background:#a4cce6"></div>
<div class="a" style="left:402px;top:285px;width:78px;height:19px;background:#c0d7e6"></div>
<div class="a" style="left:481px;top:285px;width:147px;height:19px;background:#c0d7e6"></div>
<div class="a" style="left:629px;top:285px;width:61px;height:19px;background:#c0d7e6"></div>
<div class="a" style="left:691px;top:285px;width:119px;height:19px;background:#aedffb"></div>
<div class="a" style="left:811px;top:285px;width:55px;height:19px;background:#aedffb"></div>
<div class="a" style="left:867px;top:285px;width:105px;height:19px;background:#aedffb"></div>
<div class="a" style="left:973px;top:285px;width:68px;height:19px;background:#c0d7e6"></div>
<div class="a" style="left:1042px;top:285px;width:53px;height:19px;background:#aedffb"></div>
<div class="t" style="left:29px;top:289px">7</div>
<div class="t" style="left:76px;top:289px;letter-spacing:0px">PG výstup 7</div>
<div class="t" style="left:190.5px;top:289px;letter-spacing:-0.3px">Spínací</div>
<div class="t" style="left:261px;top:289px">Vypnuto</div>
<div class="a" style="left:403px;top:286px;width:76px;height:18px;background:#fff;border:1px solid #c6d6e2;border-bottom-color:#b4c4d0;border-radius:3px;text-align:center;line-height:16px;color:#000">Aktivace</div>
<div class="a" style="left:483px;top:286px;width:142px;height:18px;background:#fff;border:1px solid #c6d6e2;border-bottom-color:#b4c4d0;border-radius:3px;text-align:center;line-height:16px;color:#000">Žádné</div>
<div class="a" style="left:629px;top:286px;width:59px;height:18px;background:#f6f6f6;border:1px solid #d0dce6;border-bottom-color:#b4c4d0;border-radius:3px;text-align:center;line-height:16px;color:#6e6e6e">Vstoupit</div>
<div class="a" style="left:744px;top:288px;width:13px;height:13px;background:#f2f2f2;border:1px solid #5a5e62;border-radius:3px"></div>
<div class="t" style="left:871px;top:289px;color:#1f7f33">Vypnut</div>
<div class="a" style="left:974px;top:286px;width:66px;height:18px;background:#fff;border:1px solid #c6d6e2;border-bottom-color:#b4c4d0;border-radius:3px;text-align:center;line-height:16px;color:#000"><span style="letter-spacing:0.6px">Test</span></div>
<div class="a" style="left:6px;top:305px;width:65px;height:19px;background:#84cff9"></div>
<div class="a" style="left:72px;top:305px;width:114px;height:19px;background:#aedffb"></div>
<div class="a" style="left:187px;top:305px;width:68px;height:19px;background:#aedffb"></div>
<div class="a" style="left:256px;top:305px;width:68px;height:19px;background:#aedffb"></div>
<div class="a" style="left:325px;top:305px;width:76px;height:19px;background:#a4cce6"></div>
<div class="a" style="left:402px;top:305px;width:78px;height:19px;background:#c0d7e6"></div>
<div class="a" style="left:481px;top:305px;width:147px;height:19px;background:#c0d7e6"></div>
<div class="a" style="left:629px;top:305px;width:61px;height:19px;background:#c0d7e6"></div>
<div class="a" style="left:691px;top:305px;width:119px;height:19px;background:#aedffb"></div>
<div class="a" style="left:811px;top:305px;width:55px;height:19px;background:#aedffb"></div>
<div class="a" style="left:867px;top:305px;width:105px;height:19px;background:#aedffb"></div>
<div class="a" style="left:973px;top:305px;width:68px;height:19px;background:#c0d7e6"></div>
<div class="a" style="left:1042px;top:305px;width:53px;height:19px;background:#aedffb"></div>
<div class="t" style="left:29px;top:309px">8</div>
<div class="t" style="left:76px;top:309px;letter-spacing:0px">PG výstup 8</div>
<div class="t" style="left:190.5px;top:309px;letter-spacing:-0.3px">Spínací</div>
<div class="t" style="left:261px;top:309px">Vypnuto</div>
<div class="a" style="left:403px;top:306px;width:76px;height:18px;background:#fff;border:1px solid #c6d6e2;border-bottom-color:#b4c4d0;border-radius:3px;text-align:center;line-height:16px;color:#000">Aktivace</div>
<div class="a" style="left:483px;top:306px;width:142px;height:18px;background:#fff;border:1px solid #c6d6e2;border-bottom-color:#b4c4d0;border-radius:3px;text-align:center;line-height:16px;color:#000">Žádné</div>
<div class="a" style="left:629px;top:306px;width:59px;height:18px;background:#f6f6f6;border:1px solid #d0dce6;border-bottom-color:#b4c4d0;border-radius:3px;text-align:center;line-height:16px;color:#6e6e6e">Vstoupit</div>
<div class="a" style="left:744px;top:308px;width:13px;height:13px;background:#f2f2f2;border:1px solid #5a5e62;border-radius:3px"></div>
<div class="t" style="left:871px;top:309px;color:#1f7f33">Vypnut</div>
<div class="a" style="left:974px;top:306px;width:66px;height:18px;background:#fff;border:1px solid #c6d6e2;border-bottom-color:#b4c4d0;border-radius:3px;text-align:center;line-height:16px;color:#000"><span style="letter-spacing:0.6px">Test</span></div>
<div class="a" style="left:6px;top:325px;width:65px;height:19px;background:#84cff9"></div>
<div class="a" style="left:72px;top:325px;width:114px;height:19px;background:#aedffb"></div>
<div class="a" style="left:187px;top:325px;width:68px;height:19px;background:#aedffb"></div>
<div class="a" style="left:256px;top:325px;width:68px;height:19px;background:#aedffb"></div>
<div class="a" style="left:325px;top:325px;width:76px;height:19px;background:#a4cce6"></div>
<div class="a" style="left:402px;top:325px;width:78px;height:19px;background:#c0d7e6"></div>
<div class="a" style="left:481px;top:325px;width:147px;height:19px;background:#c0d7e6"></div>
<div class="a" style="left:629px;top:325px;width:61px;height:19px;background:#c0d7e6"></div>
<div class="a" style="left:691px;top:325px;width:119px;height:19px;background:#aedffb"></div>
<div class="a" style="left:811px;top:325px;width:55px;height:19px;background:#aedffb"></div>
<div class="a" style="left:867px;top:325px;width:105px;height:19px;background:#aedffb"></div>
<div class="a" style="left:973px;top:325px;width:68px;height:19px;background:#c0d7e6"></div>
<div class="a" style="left:1042px;top:325px;width:53px;height:19px;background:#aedffb"></div>
<div class="t" style="left:29px;top:329px">9</div>
<div class="t" style="left:76px;top:329px;letter-spacing:0px">PG výstup 9</div>
<div class="t" style="left:190.5px;top:329px;letter-spacing:-0.3px">Spínací</div>
<div class="t" style="left:261px;top:329px">Vypnuto</div>
<div class="a" style="left:403px;top:326px;width:76px;height:18px;background:#fff;border:1px solid #c6d6e2;border-bottom-color:#b4c4d0;border-radius:3px;text-align:center;line-height:16px;color:#000">Aktivace</div>
<div class="a" style="left:483px;top:326px;width:142px;height:18px;background:#fff;border:1px solid #c6d6e2;border-bottom-color:#b4c4d0;border-radius:3px;text-align:center;line-height:16px;color:#000">Žádné</div>
<div class="a" style="left:629px;top:326px;width:59px;height:18px;background:#f6f6f6;border:1px solid #d0dce6;border-bottom-color:#b4c4d0;border-radius:3px;text-align:center;line-height:16px;color:#6e6e6e">Vstoupit</div>
<div class="a" style="left:744px;top:328px;width:13px;height:13px;background:#f2f2f2;border:1px solid #5a5e62;border-radius:3px"></div>
<div class="t" style="left:871px;top:329px;color:#1f7f33">Vypnut</div>
<div class="a" style="left:974px;top:326px;width:66px;height:18px;background:#fff;border:1px solid #c6d6e2;border-bottom-color:#b4c4d0;border-radius:3px;text-align:center;line-height:16px;color:#000"><span style="letter-spacing:0.6px">Test</span></div>
<div class="a" style="left:6px;top:345px;width:65px;height:19px;background:#84cff9"></div>
<div class="a" style="left:72px;top:345px;width:114px;height:19px;background:#aedffb"></div>
<div class="a" style="left:187px;top:345px;width:68px;height:19px;background:#aedffb"></div>
<div class="a" style="left:256px;top:345px;width:68px;height:19px;background:#aedffb"></div>
<div class="a" style="left:325px;top:345px;width:76px;height:19px;background:#a4cce6"></div>
<div class="a" style="left:402px;top:345px;width:78px;height:19px;background:#c0d7e6"></div>
<div class="a" style="left:481px;top:345px;width:147px;height:19px;background:#c0d7e6"></div>
<div class="a" style="left:629px;top:345px;width:61px;height:19px;background:#c0d7e6"></div>
<div class="a" style="left:691px;top:345px;width:119px;height:19px;background:#aedffb"></div>
<div class="a" style="left:811px;top:345px;width:55px;height:19px;background:#aedffb"></div>
<div class="a" style="left:867px;top:345px;width:105px;height:19px;background:#aedffb"></div>
<div class="a" style="left:973px;top:345px;width:68px;height:19px;background:#c0d7e6"></div>
<div class="a" style="left:1042px;top:345px;width:53px;height:19px;background:#aedffb"></div>
<div class="t" style="left:29px;top:349px">10</div>
<div class="t" style="left:76px;top:349px;letter-spacing:0px">PG výstup 10</div>
<div class="t" style="left:190.5px;top:349px;letter-spacing:-0.3px">Spínací</div>
<div class="t" style="left:261px;top:349px">Vypnuto</div>
<div class="a" style="left:403px;top:346px;width:76px;height:18px;background:#fff;border:1px solid #c6d6e2;border-bottom-color:#b4c4d0;border-radius:3px;text-align:center;line-height:16px;color:#000">Aktivace</div>
<div class="a" style="left:483px;top:346px;width:142px;height:18px;background:#fff;border:1px solid #c6d6e2;border-bottom-color:#b4c4d0;border-radius:3px;text-align:center;line-height:16px;color:#000">Žádné</div>
<div class="a" style="left:629px;top:346px;width:59px;height:18px;background:#f6f6f6;border:1px solid #d0dce6;border-bottom-color:#b4c4d0;border-radius:3px;text-align:center;line-height:16px;color:#6e6e6e">Vstoupit</div>
<div class="a" style="left:744px;top:348px;width:13px;height:13px;background:#f2f2f2;border:1px solid #5a5e62;border-radius:3px"></div>
<div class="t" style="left:871px;top:349px;color:#1f7f33">Vypnut</div>
<div class="a" style="left:974px;top:346px;width:66px;height:18px;background:#fff;border:1px solid #c6d6e2;border-bottom-color:#b4c4d0;border-radius:3px;text-align:center;line-height:16px;color:#000"><span style="letter-spacing:0.6px">Test</span></div>
<div class="a" style="left:6px;top:365px;width:65px;height:19px;background:#84cff9"></div>
<div class="a" style="left:72px;top:365px;width:114px;height:19px;background:#aedffb"></div>
<div class="a" style="left:187px;top:365px;width:68px;height:19px;background:#aedffb"></div>
<div class="a" style="left:256px;top:365px;width:68px;height:19px;background:#aedffb"></div>
<div class="a" style="left:325px;top:365px;width:76px;height:19px;background:#a4cce6"></div>
<div class="a" style="left:402px;top:365px;width:78px;height:19px;background:#c0d7e6"></div>
<div class="a" style="left:481px;top:365px;width:147px;height:19px;background:#c0d7e6"></div>
<div class="a" style="left:629px;top:365px;width:61px;height:19px;background:#c0d7e6"></div>
<div class="a" style="left:691px;top:365px;width:119px;height:19px;background:#aedffb"></div>
<div class="a" style="left:811px;top:365px;width:55px;height:19px;background:#aedffb"></div>
<div class="a" style="left:867px;top:365px;width:105px;height:19px;background:#aedffb"></div>
<div class="a" style="left:973px;top:365px;width:68px;height:19px;background:#c0d7e6"></div>
<div class="a" style="left:1042px;top:365px;width:53px;height:19px;background:#aedffb"></div>
<div class="t" style="left:29px;top:369px">11</div>
<div class="t" style="left:76px;top:369px;letter-spacing:0px">PG výstup 11</div>
<div class="t" style="left:190.5px;top:369px;letter-spacing:-0.3px">Spínací</div>
<div class="t" style="left:261px;top:369px">Vypnuto</div>
<div class="a" style="left:403px;top:366px;width:76px;height:18px;background:#fff;border:1px solid #c6d6e2;border-bottom-color:#b4c4d0;border-radius:3px;text-align:center;line-height:16px;color:#000">Aktivace</div>
<div class="a" style="left:483px;top:366px;width:142px;height:18px;background:#fff;border:1px solid #c6d6e2;border-bottom-color:#b4c4d0;border-radius:3px;text-align:center;line-height:16px;color:#000">Žádné</div>
<div class="a" style="left:629px;top:366px;width:59px;height:18px;background:#f6f6f6;border:1px solid #d0dce6;border-bottom-color:#b4c4d0;border-radius:3px;text-align:center;line-height:16px;color:#6e6e6e">Vstoupit</div>
<div class="a" style="left:744px;top:368px;width:13px;height:13px;background:#f2f2f2;border:1px solid #5a5e62;border-radius:3px"></div>
<div class="t" style="left:871px;top:369px;color:#1f7f33">Vypnut</div>
<div class="a" style="left:974px;top:366px;width:66px;height:18px;background:#fff;border:1px solid #c6d6e2;border-bottom-color:#b4c4d0;border-radius:3px;text-align:center;line-height:16px;color:#000"><span style="letter-spacing:0.6px">Test</span></div>
<div class="a" style="left:6px;top:385px;width:65px;height:19px;background:#84cff9"></div>
<div class="a" style="left:72px;top:385px;width:114px;height:19px;background:#aedffb"></div>
<div class="a" style="left:187px;top:385px;width:68px;height:19px;background:#aedffb"></div>
<div class="a" style="left:256px;top:385px;width:68px;height:19px;background:#aedffb"></div>
<div class="a" style="left:325px;top:385px;width:76px;height:19px;background:#a4cce6"></div>
<div class="a" style="left:402px;top:385px;width:78px;height:19px;background:#c0d7e6"></div>
<div class="a" style="left:481px;top:385px;width:147px;height:19px;background:#c0d7e6"></div>
<div class="a" style="left:629px;top:385px;width:61px;height:19px;background:#c0d7e6"></div>
<div class="a" style="left:691px;top:385px;width:119px;height:19px;background:#aedffb"></div>
<div class="a" style="left:811px;top:385px;width:55px;height:19px;background:#aedffb"></div>
<div class="a" style="left:867px;top:385px;width:105px;height:19px;background:#aedffb"></div>
<div class="a" style="left:973px;top:385px;width:68px;height:19px;background:#c0d7e6"></div>
<div class="a" style="left:1042px;top:385px;width:53px;height:19px;background:#aedffb"></div>
<div class="t" style="left:29px;top:389px">12</div>
<div class="t" style="left:76px;top:389px;letter-spacing:0px">PG výstup 12</div>
<div class="t" style="left:190.5px;top:389px;letter-spacing:-0.3px">Spínací</div>
<div class="t" style="left:261px;top:389px">Vypnuto</div>
<div class="a" style="left:403px;top:386px;width:76px;height:18px;background:#fff;border:1px solid #c6d6e2;border-bottom-color:#b4c4d0;border-radius:3px;text-align:center;line-height:16px;color:#000">Aktivace</div>
<div class="a" style="left:483px;top:386px;width:142px;height:18px;background:#fff;border:1px solid #c6d6e2;border-bottom-color:#b4c4d0;border-radius:3px;text-align:center;line-height:16px;color:#000">Žádné</div>
<div class="a" style="left:629px;top:386px;width:59px;height:18px;background:#f6f6f6;border:1px solid #d0dce6;border-bottom-color:#b4c4d0;border-radius:3px;text-align:center;line-height:16px;color:#6e6e6e">Vstoupit</div>
<div class="a" style="left:744px;top:388px;width:13px;height:13px;background:#f2f2f2;border:1px solid #5a5e62;border-radius:3px"></div>
<div class="t" style="left:871px;top:389px;color:#1f7f33">Vypnut</div>
<div class="a" style="left:974px;top:386px;width:66px;height:18px;background:#fff;border:1px solid #c6d6e2;border-bottom-color:#b4c4d0;border-radius:3px;text-align:center;line-height:16px;color:#000"><span style="letter-spacing:0.6px">Test</span></div>
<div class="a" style="left:6px;top:405px;width:65px;height:19px;background:#dcf3fe"></div>
<div class="a" style="left:7px;top:405px;width:64px;height:19px;background:linear-gradient(180deg,#eef5fd 0px,#c6dcfa 3px,#8eb8f4 8px,#88b3f2 15px,#a2c4f6 19px);border-radius:4px 0 0 4px"></div>
<div class="a" style="left:72px;top:405px;width:114px;height:19px;background:linear-gradient(180deg,#eef5fd 0px,#c6dcfa 3px,#8eb8f4 8px,#88b3f2 15px,#a2c4f6 19px)"></div>
<div class="a" style="left:187px;top:405px;width:68px;height:19px;background:linear-gradient(180deg,#eef5fd 0px,#c6dcfa 3px,#8eb8f4 8px,#88b3f2 15px,#a2c4f6 19px)"></div>
<div class="a" style="left:256px;top:405px;width:68px;height:19px;background:linear-gradient(180deg,#eef5fd 0px,#c6dcfa 3px,#8eb8f4 8px,#88b3f2 15px,#a2c4f6 19px)"></div>
<div class="a" style="left:325px;top:405px;width:76px;height:19px;background:linear-gradient(180deg,#eef5fd 0px,#c6dcfa 3px,#8eb8f4 8px,#88b3f2 15px,#a2c4f6 19px)"></div>
<div class="a" style="left:402px;top:405px;width:78px;height:19px;background:#c0d7e6"></div>
<div class="a" style="left:481px;top:405px;width:147px;height:19px;background:#c0d7e6"></div>
<div class="a" style="left:629px;top:405px;width:61px;height:19px;background:#c0d7e6"></div>
<div class="a" style="left:691px;top:405px;width:119px;height:19px;background:linear-gradient(180deg,#eef5fd 0px,#c6dcfa 3px,#8eb8f4 8px,#88b3f2 15px,#a2c4f6 19px)"></div>
<div class="a" style="left:811px;top:405px;width:55px;height:19px;background:linear-gradient(180deg,#eef5fd 0px,#c6dcfa 3px,#8eb8f4 8px,#88b3f2 15px,#a2c4f6 19px)"></div>
<div class="a" style="left:867px;top:405px;width:105px;height:19px;background:linear-gradient(180deg,#eef5fd 0px,#c6dcfa 3px,#8eb8f4 8px,#88b3f2 15px,#a2c4f6 19px)"></div>
<div class="a" style="left:973px;top:405px;width:68px;height:19px;background:#c0d7e6"></div>
<div class="a" style="left:1042px;top:405px;width:53px;height:19px;background:linear-gradient(180deg,#eef5fd 0px,#c6dcfa 3px,#8eb8f4 8px,#88b3f2 15px,#a2c4f6 19px)"></div>
<div class="t" style="left:29px;top:409px">13</div>
<div class="t" style="left:76px;top:409px;letter-spacing:0px">PG výstup 13</div>
<div class="t" style="left:190.5px;top:409px;letter-spacing:-0.3px">Spínací</div>
<div class="t" style="left:261px;top:409px">Vypnuto</div>
<div class="a" style="left:403px;top:406px;width:76px;height:18px;background:#fff;border:1px solid #c6d6e2;border-bottom-color:#b4c4d0;border-radius:3px;text-align:center;line-height:16px;color:#000">Aktivace</div>
<div class="a" style="left:483px;top:406px;width:142px;height:18px;background:#fff;border:1px solid #c6d6e2;border-bottom-color:#b4c4d0;border-radius:3px;text-align:center;line-height:16px;color:#000">Žádné</div>
<div class="a" style="left:629px;top:406px;width:59px;height:18px;background:#f6f6f6;border:1px solid #d0dce6;border-bottom-color:#b4c4d0;border-radius:3px;text-align:center;line-height:16px;color:#6e6e6e">Vstoupit</div>
<div class="a" style="left:744px;top:408px;width:13px;height:13px;background:#f2f2f2;border:1px solid #5a5e62;border-radius:3px"></div>
<div class="t" style="left:871px;top:409px;color:#1f7f33">Vypnut</div>
<div class="a" style="left:974px;top:406px;width:66px;height:18px;background:#fff;border:1px solid #c6d6e2;border-bottom-color:#b4c4d0;border-radius:3px;text-align:center;line-height:16px;color:#000"><span style="letter-spacing:0.6px">Test</span></div>
<div class="a" style="left:6px;top:425px;width:65px;height:19px;background:#84cff9"></div>
<div class="a" style="left:72px;top:425px;width:114px;height:19px;background:#aedffb"></div>
<div class="a" style="left:187px;top:425px;width:68px;height:19px;background:#aedffb"></div>
<div class="a" style="left:256px;top:425px;width:68px;height:19px;background:#aedffb"></div>
<div class="a" style="left:325px;top:425px;width:76px;height:19px;background:#a4cce6"></div>
<div class="a" style="left:402px;top:425px;width:78px;height:19px;background:#c0d7e6"></div>
<div class="a" style="left:481px;top:425px;width:147px;height:19px;background:#c0d7e6"></div>
<div class="a" style="left:629px;top:425px;width:61px;height:19px;background:#c0d7e6"></div>
<div class="a" style="left:691px;top:425px;width:119px;height:19px;background:#aedffb"></div>
<div class="a" style="left:811px;top:425px;width:55px;height:19px;background:#aedffb"></div>
<div class="a" style="left:867px;top:425px;width:105px;height:19px;background:#aedffb"></div>
<div class="a" style="left:973px;top:425px;width:68px;height:19px;background:#c0d7e6"></div>
<div class="a" style="left:1042px;top:425px;width:53px;height:19px;background:#aedffb"></div>
<div class="t" style="left:29px;top:429px">14</div>
<div class="t" style="left:76px;top:429px;letter-spacing:0px">PG výstup 14</div>
<div class="t" style="left:190.5px;top:429px;letter-spacing:-0.3px">Spínací</div>
<div class="t" style="left:261px;top:429px">Vypnuto</div>
<div class="a" style="left:403px;top:426px;width:76px;height:18px;background:#fff;border:1px solid #c6d6e2;border-bottom-color:#b4c4d0;border-radius:3px;text-align:center;line-height:16px;color:#000">Aktivace</div>
<div class="a" style="left:483px;top:426px;width:142px;height:18px;background:#fff;border:1px solid #c6d6e2;border-bottom-color:#b4c4d0;border-radius:3px;text-align:center;line-height:16px;color:#000">Žádné</div>
<div class="a" style="left:629px;top:426px;width:59px;height:18px;background:#f6f6f6;border:1px solid #d0dce6;border-bottom-color:#b4c4d0;border-radius:3px;text-align:center;line-height:16px;color:#6e6e6e">Vstoupit</div>
<div class="a" style="left:744px;top:428px;width:13px;height:13px;background:#f2f2f2;border:1px solid #5a5e62;border-radius:3px"></div>
<div class="t" style="left:871px;top:429px;color:#1f7f33">Vypnut</div>
<div class="a" style="left:974px;top:426px;width:66px;height:18px;background:#fff;border:1px solid #c6d6e2;border-bottom-color:#b4c4d0;border-radius:3px;text-align:center;line-height:16px;color:#000"><span style="letter-spacing:0.6px">Test</span></div>
<div class="a" style="left:6px;top:445px;width:65px;height:19px;background:#84cff9"></div>
<div class="a" style="left:72px;top:445px;width:114px;height:19px;background:#aedffb"></div>
<div class="a" style="left:187px;top:445px;width:68px;height:19px;background:#aedffb"></div>
<div class="a" style="left:256px;top:445px;width:68px;height:19px;background:#aedffb"></div>
<div class="a" style="left:325px;top:445px;width:76px;height:19px;background:#a4cce6"></div>
<div class="a" style="left:402px;top:445px;width:78px;height:19px;background:#c0d7e6"></div>
<div class="a" style="left:481px;top:445px;width:147px;height:19px;background:#c0d7e6"></div>
<div class="a" style="left:629px;top:445px;width:61px;height:19px;background:#c0d7e6"></div>
<div class="a" style="left:691px;top:445px;width:119px;height:19px;background:#aedffb"></div>
<div class="a" style="left:811px;top:445px;width:55px;height:19px;background:#aedffb"></div>
<div class="a" style="left:867px;top:445px;width:105px;height:19px;background:#aedffb"></div>
<div class="a" style="left:973px;top:445px;width:68px;height:19px;background:#c0d7e6"></div>
<div class="a" style="left:1042px;top:445px;width:53px;height:19px;background:#aedffb"></div>
<div class="t" style="left:29px;top:449px">15</div>
<div class="t" style="left:76px;top:449px;letter-spacing:0px">PG výstup 15</div>
<div class="t" style="left:190.5px;top:449px;letter-spacing:-0.3px">Spínací</div>
<div class="t" style="left:261px;top:449px">Vypnuto</div>
<div class="a" style="left:403px;top:446px;width:76px;height:18px;background:#fff;border:1px solid #c6d6e2;border-bottom-color:#b4c4d0;border-radius:3px;text-align:center;line-height:16px;color:#000">Aktivace</div>
<div class="a" style="left:483px;top:446px;width:142px;height:18px;background:#fff;border:1px solid #c6d6e2;border-bottom-color:#b4c4d0;border-radius:3px;text-align:center;line-height:16px;color:#000">Žádné</div>
<div class="a" style="left:629px;top:446px;width:59px;height:18px;background:#f6f6f6;border:1px solid #d0dce6;border-bottom-color:#b4c4d0;border-radius:3px;text-align:center;line-height:16px;color:#6e6e6e">Vstoupit</div>
<div class="a" style="left:744px;top:448px;width:13px;height:13px;background:#f2f2f2;border:1px solid #5a5e62;border-radius:3px"></div>
<div class="t" style="left:871px;top:449px;color:#1f7f33">Vypnut</div>
<div class="a" style="left:974px;top:446px;width:66px;height:18px;background:#fff;border:1px solid #c6d6e2;border-bottom-color:#b4c4d0;border-radius:3px;text-align:center;line-height:16px;color:#000"><span style="letter-spacing:0.6px">Test</span></div>
<div class="a" style="left:6px;top:465px;width:65px;height:19px;background:#84cff9"></div>
<div class="a" style="left:72px;top:465px;width:114px;height:19px;background:#aedffb"></div>
<div class="a" style="left:187px;top:465px;width:68px;height:19px;background:#aedffb"></div>
<div class="a" style="left:256px;top:465px;width:68px;height:19px;background:#aedffb"></div>
<div class="a" style="left:325px;top:465px;width:76px;height:19px;background:#a4cce6"></div>
<div class="a" style="left:402px;top:465px;width:78px;height:19px;background:#c0d7e6"></div>
<div class="a" style="left:481px;top:465px;width:147px;height:19px;background:#c0d7e6"></div>
<div class="a" style="left:629px;top:465px;width:61px;height:19px;background:#c0d7e6"></div>
<div class="a" style="left:691px;top:465px;width:119px;height:19px;background:#aedffb"></div>
<div class="a" style="left:811px;top:465px;width:55px;height:19px;background:#aedffb"></div>
<div class="a" style="left:867px;top:465px;width:105px;height:19px;background:#aedffb"></div>
<div class="a" style="left:973px;top:465px;width:68px;height:19px;background:#c0d7e6"></div>
<div class="a" style="left:1042px;top:465px;width:53px;height:19px;background:#aedffb"></div>
<div class="t" style="left:29px;top:469px">16</div>
<div class="t" style="left:76px;top:469px;letter-spacing:0px">PG výstup 16</div>
<div class="t" style="left:190.5px;top:469px;letter-spacing:-0.3px">Spínací</div>
<div class="t" style="left:261px;top:469px">Vypnuto</div>
<div class="a" style="left:403px;top:466px;width:76px;height:18px;background:#fff;border:1px solid #c6d6e2;border-bottom-color:#b4c4d0;border-radius:3px;text-align:center;line-height:16px;color:#000">Aktivace</div>
<div class="a" style="left:483px;top:466px;width:142px;height:18px;background:#fff;border:1px solid #c6d6e2;border-bottom-color:#b4c4d0;border-radius:3px;text-align:center;line-height:16px;color:#000">Žádné</div>
<div class="a" style="left:629px;top:466px;width:59px;height:18px;background:#f6f6f6;border:1px solid #d0dce6;border-bottom-color:#b4c4d0;border-radius:3px;text-align:center;line-height:16px;color:#6e6e6e">Vstoupit</div>
<div class="a" style="left:744px;top:468px;width:13px;height:13px;background:#f2f2f2;border:1px solid #5a5e62;border-radius:3px"></div>
<div class="t" style="left:871px;top:469px;color:#1f7f33">Vypnut</div>
<div class="a" style="left:974px;top:466px;width:66px;height:18px;background:#fff;border:1px solid #c6d6e2;border-bottom-color:#b4c4d0;border-radius:3px;text-align:center;line-height:16px;color:#000"><span style="letter-spacing:0.6px">Test</span></div>
<div class="a" style="left:1px;top:485px;width:1116px;height:19px;background:#f0f0f0;border-radius:0 0 6px 6px"></div>
<div class="a" style="left:6px;top:485px;width:1106px;height:1px;background:#d6d6d6"></div>
<div class="a" style="left:631px;top:487px;width:1px;height:16px;background:#d8d8d8"></div>
<div class="t" style="left:636px;top:489px;font-size:10.5px;letter-spacing:0.08px;-webkit-text-stroke:0.35px #000">FW: MD6112.09.1 HW: MD15005 SN: 1400-40-3701-9164</div>
<div class="a" style="left:916px;top:487px;width:1px;height:16px;background:#d8d8d8"></div>
<div class="a" style="left:919px;top:487px;width:16px;height:16px;background:linear-gradient(180deg,#b4f8b4 0%,#7aea7a 50%,#5cdc5c 100%);border:1px solid #6cc06c;border-radius:3px;text-align:center;line-height:14px;font-weight:bold">1</div>
<div class="a" style="left:938px;top:487px;width:1px;height:16px;background:#d8d8d8"></div>
<svg class="a" style="left:941px;top:489px" width="12" height="13" viewBox="0 0 12 13"><circle cx="6" cy="6" r="4" fill="none" stroke="#262626" stroke-width="2.2"/><path d="M3.8 12.5c0-2.5 1-4 2.2-4s2.2 1.5 2.2 4z" fill="#f2a818"/></svg>
<div class="a" style="left:954px;top:487px;width:1px;height:16px;background:#d8d8d8"></div>
<svg class="a" style="left:958px;top:489px" width="10" height="15" viewBox="0 0 10 15"><path d="M2.8 0.5h4.4v8.3h2.4l-4.6 5.7l-4.6-5.7h2.4z" fill="#3cb43c" stroke="#2a7a1a" stroke-width="0.8"/><path d="M3.8 1.5v8" stroke="#9ae88a" stroke-width="0.9"/></svg>
<div class="t" style="left:969px;top:489px;-webkit-text-stroke:0.35px #000">53,4KB</div>
<svg class="a" style="left:1005px;top:488px" width="10" height="15" viewBox="0 0 10 15"><path d="M2.8 14.5h4.4v-8.3h2.4l-4.6-5.7l-4.6 5.7h2.4z" fill="#d01020" stroke="#801010" stroke-width="0.8"/><path d="M3.8 6.2v8" stroke="#f07070" stroke-width="0.9"/></svg>
<div class="t" style="left:1016px;top:489px;font-size:10.5px;letter-spacing:0.12px;-webkit-text-stroke:0.35px #000">42,4KB GSM: 2G</div>
<div class="a" style="left:1110px;top:492px;width:2px;height:2px;background:#c4c4c4"></div>
<div class="a" style="left:1107px;top:495px;width:2px;height:2px;background:#c4c4c4"></div>
<div class="a" style="left:1110px;top:495px;width:2px;height:2px;background:#c4c4c4"></div>
<div class="a" style="left:1104px;top:498px;width:2px;height:2px;background:#c4c4c4"></div>
<div class="a" style="left:1107px;top:498px;width:2px;height:2px;background:#c4c4c4"></div>
<div class="a" style="left:1110px;top:498px;width:2px;height:2px;background:#c4c4c4"></div>
</body></html>
